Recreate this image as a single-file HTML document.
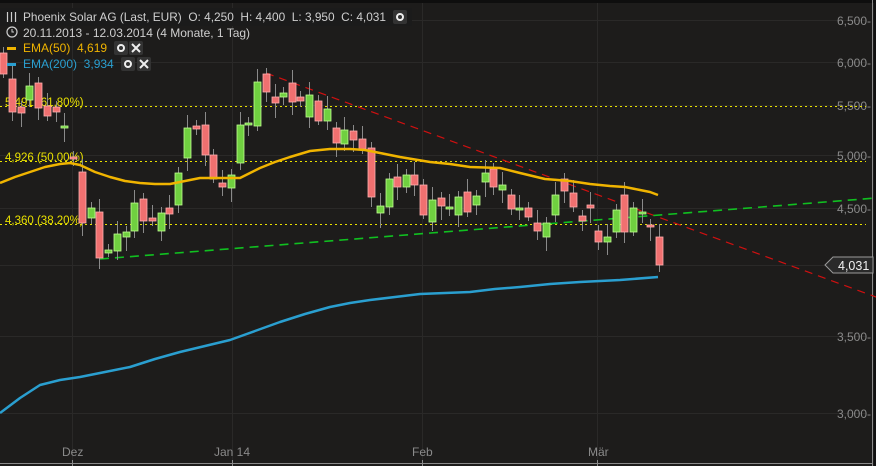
<!DOCTYPE html>
<html><head><meta charset="utf-8"><style>
html,body{margin:0;padding:0;background:#1d1c1b;}
svg{display:block;font-family:"Liberation Sans",sans-serif;}
text{white-space:pre;}
</style></head><body>
<svg id="s" width="876" height="466" viewBox="0 0 876 466" xmlns="http://www.w3.org/2000/svg">
<rect width="876" height="466" fill="#1d1c1b"/>
<rect width="876" height="3" fill="#0e0e0e"/>
<g stroke="#2a2928" stroke-width="1">
<line x1="0" y1="20.5" x2="866" y2="20.5"/><line x1="0" y1="62.5" x2="866" y2="62.5"/>
<line x1="0" y1="105.5" x2="866" y2="105.5"/><line x1="0" y1="155.5" x2="866" y2="155.5"/>
<line x1="0" y1="208.5" x2="866" y2="208.5"/><line x1="0" y1="265.5" x2="866" y2="265.5"/>
<line x1="0" y1="336.5" x2="866" y2="336.5"/><line x1="0" y1="413.5" x2="866" y2="413.5"/>
<line x1="72.5" y1="3" x2="72.5" y2="462"/><line x1="232.5" y1="3" x2="232.5" y2="462"/>
<line x1="422.5" y1="3" x2="422.5" y2="462"/><line x1="597.5" y1="3" x2="597.5" y2="462"/>
</g>
<line x1="0" y1="463.5" x2="872" y2="463.5" stroke="#8a8a8a"/>
<line x1="872.5" y1="0" x2="872.5" y2="466" stroke="#8a8a8a"/>
<rect x="874" y="0" width="2" height="466" fill="#111"/>
<g stroke="#8a8a8a"><line x1="72.5" y1="460" x2="72.5" y2="466"/><line x1="232.5" y1="460" x2="232.5" y2="466"/><line x1="422.5" y1="460" x2="422.5" y2="466"/><line x1="597.5" y1="460" x2="597.5" y2="466"/></g>
<g fill="#8a8a8a" font-size="12">
<text x="62" y="456">Dez</text><text x="214" y="456">Jan 14</text><text x="412" y="456">Feb</text><text x="588" y="456">Mär</text>
</g>
<g fill="#8a8a8a" font-size="12" text-anchor="end">
<text x="871" y="25">6,500-</text><text x="871" y="67">6,000-</text><text x="871" y="110">5,500-</text>
<text x="871" y="160">5,000-</text><text x="871" y="213">4,500-</text><text x="871" y="341">3,500-</text><text x="871" y="418">3,000-</text>
</g>
<g stroke="#e8e000" stroke-width="1" stroke-dasharray="2,3">
<line x1="0" y1="106.5" x2="866" y2="106.5"/><line x1="0" y1="161.5" x2="866" y2="161.5"/><line x1="0" y1="224.5" x2="866" y2="224.5"/>
</g>
<g fill="#e8e000" font-size="11.5">
<text x="5" y="106">5,491 (61.80%)</text><text x="5" y="161">4,926 (50.00%)</text><text x="5" y="224">4,360 (38.20%)</text>
</g>
<line x1="266" y1="73" x2="876" y2="297" stroke="#d01010" stroke-width="1.2" stroke-dasharray="8,6"/>
<line x1="100" y1="259" x2="876" y2="198" stroke="#10c020" stroke-width="1.6" stroke-dasharray="9,6"/>
<g id="c"></g>
<polyline fill="none" stroke="#f0b400" stroke-width="2.5" stroke-linejoin="round" points="0,183 15,177 30,172 45,167 60,164 70,163 80,165 95,172 110,177 125,181 140,183 155,184 170,184 185,181 200,178 220,178 240,178 250,173 260,168 275,162 290,157 310,151 330,149 350,149 365,150 380,153 400,157 430,162 450,164 470,167 500,168 520,173 545,179 570,181 590,184 610,186 625,187 640,190 650,192 658,195"/>
<polyline fill="none" stroke="#2a9fd0" stroke-width="2.5" stroke-linejoin="round" points="0,413 20,398 40,385 60,380 80,377 105,372 130,367 155,359 180,352 205,346 230,340 255,331 280,322 305,314 330,307 350,303 370,300 395,297 420,294 445,293 470,292 495,289 520,287 550,284 580,282 620,280 658,277"/>
<path d="M825 265 L833 257 H873 V273 H833 Z" fill="#2a2a2a" stroke="#9a9a9a"/>
<text x="838" y="270" fill="#f0f0f0" font-size="12.5">4,031</text>
<rect x="0" y="8" width="412" height="18" fill="#1b1b1b"/>
<g font-size="12" fill="#cfcfcf">
<g stroke="#cfcfcf" stroke-width="1.2"><line x1="7.5" y1="12" x2="7.5" y2="22"/><line x1="11.5" y1="12" x2="11.5" y2="22"/><line x1="15.5" y1="12" x2="15.5" y2="22"/></g>
<text x="23" y="21" textLength="363" lengthAdjust="spacingAndGlyphs">Phoenix Solar AG (Last, EUR)  O: 4,250  H: 4,400  L: 3,950  C: 4,031</text>
<rect x="393" y="10" width="14" height="14" rx="2" fill="#333"/><circle cx="400" cy="17" r="3" fill="none" stroke="#eee" stroke-width="2"/>
<circle cx="12" cy="32" r="5" fill="none" stroke="#cfcfcf" stroke-width="1.2"/><path d="M12 29 V32 H14" stroke="#cfcfcf" fill="none"/>
<text x="23" y="37">20.11.2013 - 12.03.2014 (4 Monate, 1 Tag)</text>
<rect x="7" y="47" width="9" height="3" fill="#f0b400"/>
<text x="23" y="52" fill="#f0b400">EMA(50)  4,619</text>
<rect x="114" y="41" width="14" height="14" rx="2" fill="#333"/><circle cx="121" cy="48" r="3" fill="none" stroke="#eee" stroke-width="2"/>
<rect x="129" y="41" width="14" height="14" rx="2" fill="#333"/><path d="M132 44 L140 52 M140 44 L132 52" stroke="#eee" stroke-width="2"/>
<rect x="7" y="63" width="9" height="3" fill="#2a9fd0"/>
<text x="23" y="68" fill="#2a9fd0">EMA(200)  3,934</text>
<rect x="121" y="57" width="14" height="14" rx="2" fill="#333"/><circle cx="128" cy="64" r="3" fill="none" stroke="#eee" stroke-width="2"/>
<rect x="137" y="57" width="14" height="14" rx="2" fill="#333"/><path d="M140 60 L148 68 M148 60 L140 68" stroke="#eee" stroke-width="2"/>
</g>
</svg>
<script>
var d=[[3,53,74,1],[12,79,112,1],[21,107,113,1],[29,86,100,0],[38,83,108,1],[47,106,116,1],[56,107,112,1],[64,126,127,0],[73,157,158,1],[82,172,223,1],[91,208,218,0],[99,212,258,1],[108,250,253,0],[117,234,251,0],[126,232,237,0],[134,203,231,0],[143,199,221,1],[152,218,221,1],[161,213,231,0],[169,208,214,1],[178,173,205,0],[187,128,158,0],[196,126,129,1],[205,125,155,1],[213,155,179,1],[222,183,187,1],[231,175,188,0],[240,125,163,0],[248,123,124,0],[257,82,126,0],[266,74,92,1],[275,97,103,1],[283,93,97,0],[292,83,102,1],[300,97,101,1],[309,95,117,0],[318,101,121,1],[327,109,121,0],[336,128,143,1],[344,130,144,0],[353,131,140,1],[362,139,149,1],[371,148,197,1],[380,206,213,0],[389,179,207,0],[397,177,187,1],[406,175,187,0],[414,175,185,1],[423,185,215,1],[432,200,222,0],[441,198,206,1],[449,207,209,0],[458,197,215,0],[467,192,212,1],[476,196,205,0],[485,173,182,0],[493,169,187,1],[502,185,190,0],[511,195,209,1],[519,208,209,0],[528,208,217,1],[537,223,231,1],[546,223,237,0],[555,195,215,0],[564,179,191,1],[573,193,207,1],[582,216,221,1],[590,205,208,1],[598,231,242,1],[607,237,242,0],[616,210,232,0],[624,195,232,1],[633,208,232,0],[642,212,214,0],[650,225,227,1],[659,237,265,1]];
var s='';d.forEach(function(c,i){var wt=c[1]-(6+(i*7)%14),wb=c[2]+(4+(i*5)%12);
s+='<line x1="'+(c[0]+.5)+'" y1="'+wt+'" x2="'+(c[0]+.5)+'" y2="'+wb+'" stroke="#8a8a8a"/>';
s+='<rect x="'+(c[0]-3)+'" y="'+c[1]+'" width="7" height="'+Math.max(2,c[2]-c[1])+'" fill="'+(c[3]?'#f07070':'#70d040')+'" stroke="'+(c[3]?'#ffb0b0':'#c0ff90')+'" stroke-width="0.8"/>';});
document.getElementById('c').innerHTML=s;
</script>
</body></html>
